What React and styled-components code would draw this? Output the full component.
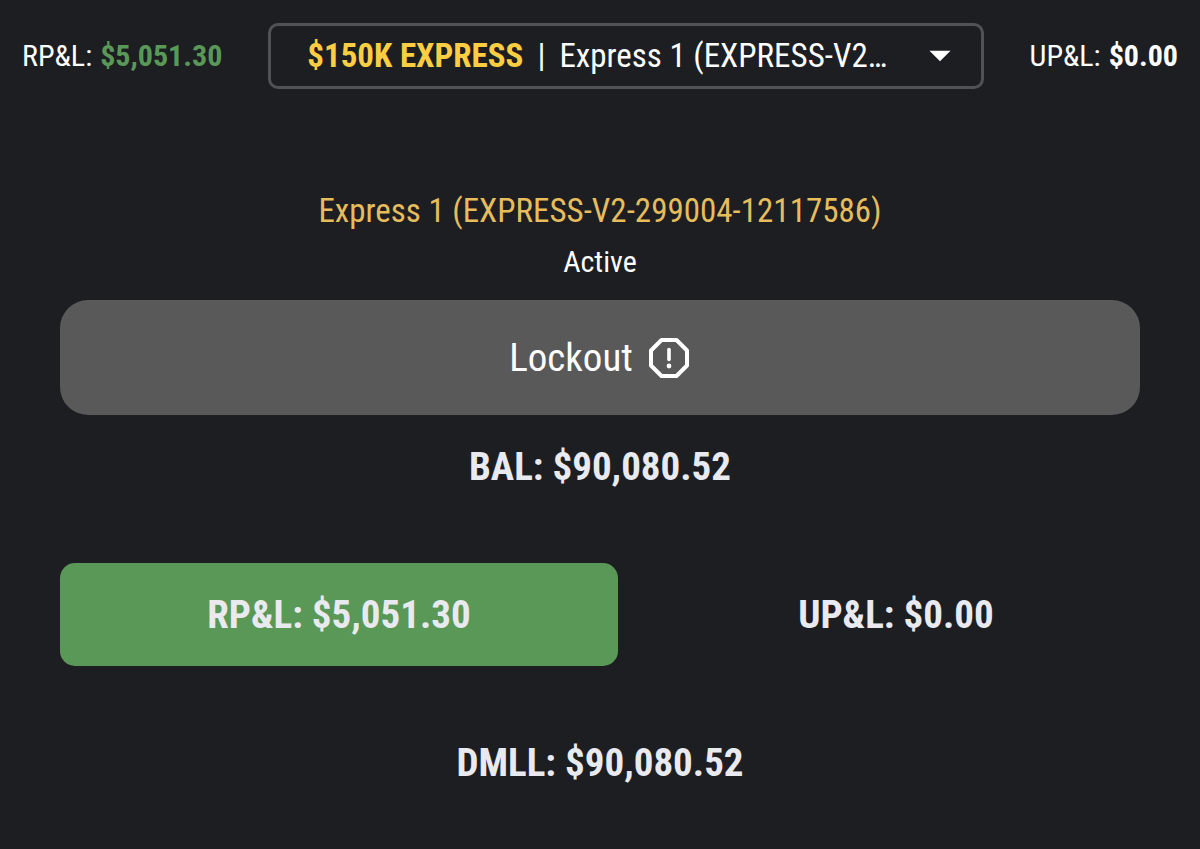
import { useState } from 'react';
import styled, { createGlobalStyle } from 'styled-components';
import { IoMdArrowDropdown } from 'react-icons/io';

/* ---------------------------------- style --------------------------------- */
const GlobalStyle = createGlobalStyle`
  * {
    box-sizing: border-box;
  }
  body {
    margin: 0;
    min-height: 100vh;
    background-color: #1d1e22;
    color: #fff;
    font-family: 'Roboto Condensed', Roboto, 'Liberation Sans Narrow', sans-serif;
  }
`;
const TopBar = styled.header`
  display: flex;
  align-items: center;
  justify-content: space-between;
  gap: 46px;
  padding: 23px 22px 0;
`;
const Stat = styled.span`
  display: flex;
  gap: 8px;
  font-size: 30px;
  line-height: 40px;
  white-space: nowrap;
`;
const StatValue = styled.strong`
  font-weight: 700;
  color: ${({ $positive }) => ($positive ? '#5a9857' : '#fff')};
`;
const Picker = styled.label`
  position: relative;
  display: flex;
  flex: 1;
  align-items: center;
  justify-content: space-between;
  gap: 24px;
  min-width: 0;
  height: 66px;
  padding: 0 20px 0 36px;
  border: 3px solid #505255;
  border-radius: 10px;
  font-size: 33px;
  line-height: 44px;
  &:focus-within {
    border-color: #8a8c90;
  }
`;
const PickerText = styled.span`
  overflow: hidden;
  white-space: nowrap;
  text-overflow: ellipsis;
`;
const Plan = styled.strong`
  color: #fdce41;
`;
const Divider = styled.span`
  margin: 0 14px;
`;
const Arrow = styled.svg`
  flex: none;
  width: 42px;
  height: 42px;
`;
// Sits over the two-coloured label, so the native menu opens on click
const NativeSelect = styled.select`
  position: absolute;
  inset: 0;
  width: 100%;
  height: 100%;
  opacity: 0;
  cursor: pointer;
`;
const Panel = styled.main`
  display: flex;
  flex-direction: column;
  padding: 100px 60px 36px;
  text-align: center;
`;
const AccountName = styled.h1`
  margin: 0;
  font-size: 33px;
  font-weight: 400;
  line-height: 44px;
  color: #e6bc5c;
`;
const Status = styled.p`
  margin: 9px 0 18px;
  font-size: 30px;
  line-height: 40px;
`;
const LockoutButton = styled.button`
  display: flex;
  align-items: center;
  justify-content: center;
  gap: 14px;
  height: 115px;
  border: 0;
  border-radius: 28px;
  background-color: #595959;
  color: #fff;
  font-family: inherit;
  font-size: 39px;
  cursor: pointer;
`;
const AlertIcon = styled.svg`
  width: 44px;
  height: 44px;
`;
const Figure = styled.p`
  display: flex;
  align-items: center;
  justify-content: center;
  margin: 0;
  height: 103px;
  border-radius: 15px;
  background-color: ${({ $positive }) => ($positive ? '#5a9857' : 'transparent')};
  color: #e8eaf0;
  font-size: 39px;
  font-weight: 700;
`;
const FigureRow = styled.div`
  display: grid;
  grid-template-columns: 8fr 7fr;
  gap: 34px;
  margin: 45px 0;
`;

/* -------------------------------- component ------------------------------- */
const accounts = [
  { id: 'EXPRESS-V2-299004-12117586', name: 'Express 1', plan: '$150K EXPRESS' },
];

const App = () => {
  const [accountId, setAccountId] = useState(accounts[0].id);
  const account = accounts.find((a) => a.id === accountId);
  const title = `${account.name} (${account.id})`;

  return (
    <>
      <GlobalStyle />
      <TopBar>
        <Stat>
          RP&amp;L: <StatValue $positive>$5,051.30</StatValue>
        </Stat>
        <Picker>
          <PickerText>
            <Plan>{account.plan}</Plan>
            <Divider>|</Divider>
            {title}
          </PickerText>
          <Arrow as={IoMdArrowDropdown} aria-hidden="true" />
          <NativeSelect
            aria-label="Account"
            value={accountId}
            onChange={(e) => setAccountId(e.target.value)}
          >
            {accounts.map((a) => (
              <option key={a.id} value={a.id}>
                {a.name}
              </option>
            ))}
          </NativeSelect>
        </Picker>
        <Stat>
          UP&amp;L: <StatValue>$0.00</StatValue>
        </Stat>
      </TopBar>

      <Panel>
        <AccountName>{title}</AccountName>
        <Status>Active</Status>
        <LockoutButton type="button">
          Lockout
          <AlertIcon viewBox="0 0 44 44" fill="none" aria-hidden="true">
            <path
              d="M14.5 4h15L40 14.5v15L29.5 40h-15L4 29.5v-15Z"
              stroke="currentColor"
              strokeWidth="4"
              strokeLinejoin="round"
            />
            <path
              d="M22 13.5v10"
              stroke="currentColor"
              strokeWidth="3.6"
              strokeLinecap="round"
            />
            <circle cx="22" cy="30" r="2.4" fill="currentColor" />
          </AlertIcon>
        </LockoutButton>
        <Figure>BAL: $90,080.52</Figure>
        <FigureRow>
          <Figure $positive>RP&amp;L: $5,051.30</Figure>
          <Figure>UP&amp;L: $0.00</Figure>
        </FigureRow>
        <Figure>DMLL: $90,080.52</Figure>
      </Panel>
    </>
  );
};

export default App;
